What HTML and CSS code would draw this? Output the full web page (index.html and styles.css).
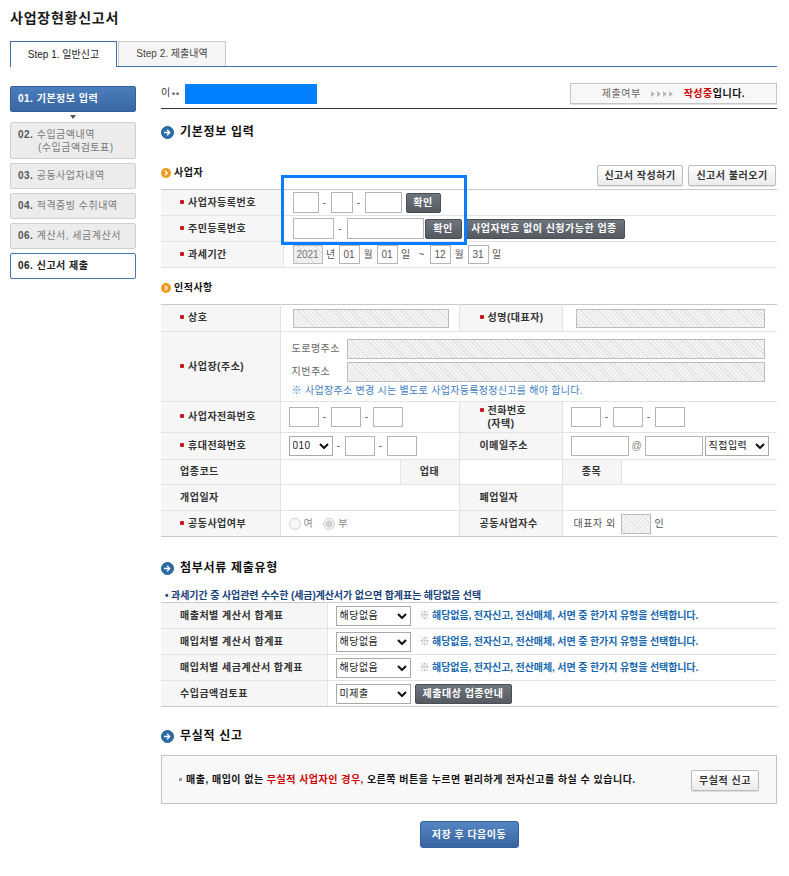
FILE: index.html
```html
<!DOCTYPE html>
<html lang="ko">
<head>
<meta charset="utf-8">
<title>사업장현황신고서</title>
<link rel="stylesheet" href="styles.css">
</head>
<body>
<div class="page">
  <h1 class="title">사업장현황신고서</h1>
  <div class="tabs">
    <div class="tab tab-on">Step 1. 일반신고</div>
    <div class="tab">Step 2. 제출내역</div>
  </div>
  <div class="layout">
    <nav class="side">
      <div class="step step-cur"><b>01. 기본정보 입력</b></div>
      <div class="step-arrow"><span class="tri"></span></div>
      <div class="step step-tall"><span><b>02.</b> 수입금액내역</span><span class="indent">(수입금액검토표)</span></div>
      <div class="step"><span><b>03.</b> 공동사업자내역</span></div>
      <div class="step"><span><b>04.</b> 적격증빙 수취내역</span></div>
      <div class="step"><span><b>06.</b> 계산서, 세금계산서</span></div>
      <div class="step step-on"><b>06. 신고서 제출</b></div>
    </nav>

    <main class="main">
      <div class="topbar">
        <div class="who"><span>이<span class="stars">**</span></span><span class="mask"></span></div>
        <div class="status">
          <span class="st-label">제출여부</span>
          <svg class="st-arrows" width="23" height="6" viewBox="0 0 23 6"><path d="M0 0l4 3-4 3zM6 0l4 3-4 3zM12 0l4 3-4 3zM18 0l4 3-4 3z" fill="#b9b9b9"/></svg>
          <b class="red">작성중</b><b class="dark">입니다.</b>
        </div>
      </div>

      <h2 class="sec sec-first">
        <svg width="13" height="13" viewBox="0 0 13 13"><circle cx="6.5" cy="6.5" r="6" fill="#2d6dab" stroke="#1f5890"/><path d="M3.6 6.5h4.8M6.5 4.3l2.2 2.2-2.2 2.2" stroke="#fff" stroke-width="1.4" fill="none" stroke-linecap="round" stroke-linejoin="round"/></svg>
        기본정보 입력
      </h2>

      <div class="subhead">
        <h3 class="sub">
          <svg width="10" height="10" viewBox="0 0 10 10"><circle cx="5" cy="5" r="5" fill="#f29a1c"/><path d="M4 2.8l2.1 2.2L4 7.2" stroke="#fff" stroke-width="1.4" fill="none"/></svg>
          사업자
        </h3>
        <div class="btns">
          <button class="btn-light w86">신고서 작성하기</button>
          <button class="btn-light w88">신고서 불러오기</button>
        </div>
      </div>

      <div class="t1wrap">
        <table class="grid t1">
          <colgroup><col class="c122"><col></colgroup>
          <tr>
            <th><span class="req"></span>사업자등록번호</th>
            <td>
              <div class="fl">
                <input class="ip w26" type="text"><span class="dash">-</span><input class="ip w22" type="text"><span class="dash">-</span><input class="ip w37" type="text">
                <button class="btn-dark w35 ml4">확인</button>
              </div>
            </td>
          </tr>
          <tr>
            <th><span class="req"></span>주민등록번호</th>
            <td>
              <div class="fl">
                <input class="ip w41" type="text"><span class="dash d13">-</span><input class="ip w77" type="text">
                <button class="btn-dark w37 ml1">확인</button>
                <button class="btn-dark w161 ml2">사업자번호 없이 신청가능한 업종</button>
              </div>
            </td>
          </tr>
          <tr>
            <th><span class="req"></span>과세기간</th>
            <td>
              <div class="fl">
                <input class="ip hatch w30 h19" type="text" value="2021" disabled><span class="u">년</span><input class="ip w21 h19" type="text" value="01"><span class="u u17">월</span><input class="ip w21 h19" type="text" value="01"><span class="u">일</span><span class="u">~</span><input class="ip w21 h19" type="text" value="12"><span class="u u17">월</span><input class="ip w21 h19" type="text" value="31"><span class="u">일</span>
              </div>
            </td>
          </tr>
        </table>
        <div class="hl"></div>
      </div>

      <h3 class="sub sub-alone">
        <svg width="10" height="10" viewBox="0 0 10 10"><circle cx="5" cy="5" r="5" fill="#f29a1c"/><path d="M4 2.8l2.1 2.2L4 7.2" stroke="#fff" stroke-width="1.4" fill="none"/></svg>
        인적사항
      </h3>

      <table class="grid t2">
        <colgroup><col class="c119"><col class="c120"><col class="c59"><col class="c103"><col class="c59"><col class="c156"></colgroup>
        <tr class="r27">
          <th><span class="req"></span>상호</th>
          <td colspan="2" class="p12"><input class="ip hatch w156 h19" type="text" disabled></td>
          <th class="th2"><span class="req"></span>성명(대표자)</th>
          <td colspan="2" class="p13"><input class="ip hatch w189 h19" type="text" disabled></td>
        </tr>
        <tr class="r70">
          <th><span class="req"></span>사업장(주소)</th>
          <td colspan="5" class="addr">
            <div class="addr-line"><span class="addr-lab">도로명주소</span><input class="ip hatch full" type="text" disabled></div>
            <div class="addr-line"><span class="addr-lab">지번주소</span><input class="ip hatch full" type="text" disabled></div>
            <div class="addr-note">※ 사업장주소 변경 시는 별도로 사업자등록정정신고를 해야 합니다.</div>
          </td>
        </tr>
        <tr class="r31">
          <th><span class="req"></span>사업자전화번호</th>
          <td colspan="2">
            <div class="fl"><input class="ip w30" type="text"><span class="dash">-</span><input class="ip w30" type="text"><span class="dash">-</span><input class="ip w30" type="text"></div>
          </td>
          <th class="th2"><div class="two"><span class="req"></span><span>전화번호<br>(자택)</span></div></th>
          <td colspan="2">
            <div class="fl"><input class="ip w30" type="text"><span class="dash">-</span><input class="ip w30" type="text"><span class="dash">-</span><input class="ip w30" type="text"></div>
          </td>
        </tr>
        <tr class="r27">
          <th><span class="req"></span>휴대전화번호</th>
          <td colspan="2">
            <div class="fl">
              <span class="sel w44"><select><option>010</option></select><svg width="10" height="6" viewBox="0 0 10 6"><path d="M1 1l4 4 4-4" stroke="#111" stroke-width="2" fill="none"/></svg></span><span class="dash">-</span><input class="ip w30" type="text"><span class="dash">-</span><input class="ip w30" type="text">
            </div>
          </td>
          <th class="th2">이메일주소</th>
          <td colspan="2">
            <div class="fl">
              <input class="ip w58" type="text"><span class="at">@</span><input class="ip w58" type="text">
              <span class="sel w64 ml2"><select><option>직접입력</option></select><svg width="10" height="6" viewBox="0 0 10 6"><path d="M1 1l4 4 4-4" stroke="#111" stroke-width="2" fill="none"/></svg></span>
            </div>
          </td>
        </tr>
        <tr class="r25">
          <th>업종코드</th>
          <td></td>
          <th class="c">업태</th>
          <td></td>
          <th class="c">종목</th>
          <td></td>
        </tr>
        <tr class="r26">
          <th>개업일자</th>
          <td colspan="2"></td>
          <th class="th2">폐업일자</th>
          <td colspan="2"></td>
        </tr>
        <tr class="r26">
          <th><span class="req"></span>공동사업여부</th>
          <td colspan="2">
            <div class="fl radios">
              <label class="rd"><input type="radio" name="jo" disabled><span>여</span></label>
              <label class="rd"><input type="radio" name="jo" checked disabled><span>부</span></label>
            </div>
          </td>
          <th class="th2">공동사업자수</th>
          <td colspan="2" class="p11">
            <div class="fl"><span class="gray">대표자 외</span><input class="ip hatch w30 h20 ml5" type="text" disabled><span class="gray ml4">인</span></div>
          </td>
        </tr>
      </table>

      <h2 class="sec sec-attach">
        <svg width="13" height="13" viewBox="0 0 13 13"><circle cx="6.5" cy="6.5" r="6" fill="#2d6dab" stroke="#1f5890"/><path d="M3.6 6.5h4.8M6.5 4.3l2.2 2.2-2.2 2.2" stroke="#fff" stroke-width="1.4" fill="none" stroke-linecap="round" stroke-linejoin="round"/></svg>
        첨부서류 제출유형
      </h2>
      <p class="note-line">• 과세기간 중 사업관련 수수한 (세금)계산서가 없으면 합계표는 해당없음 선택</p>

      <table class="grid t3">
        <colgroup><col class="c166"><col></colgroup>
        <tr>
          <th>매출처별 계산서 합계표</th>
          <td><div class="fl"><span class="sel w75"><select><option>해당없음</option></select><svg width="10" height="6" viewBox="0 0 10 6"><path d="M1 1l4 4 4-4" stroke="#111" stroke-width="2" fill="none"/></svg></span><span class="guide"><span class="kome">※</span> 해당없음, 전자신고, 전산매체, 서면 중 한가지 유형을 선택합니다.</span></div></td>
        </tr>
        <tr>
          <th>매입처별 계산서 합계표</th>
          <td><div class="fl"><span class="sel w75"><select><option>해당없음</option></select><svg width="10" height="6" viewBox="0 0 10 6"><path d="M1 1l4 4 4-4" stroke="#111" stroke-width="2" fill="none"/></svg></span><span class="guide"><span class="kome">※</span> 해당없음, 전자신고, 전산매체, 서면 중 한가지 유형을 선택합니다.</span></div></td>
        </tr>
        <tr>
          <th>매입처별 세금계산서 합계표</th>
          <td><div class="fl"><span class="sel w75"><select><option>해당없음</option></select><svg width="10" height="6" viewBox="0 0 10 6"><path d="M1 1l4 4 4-4" stroke="#111" stroke-width="2" fill="none"/></svg></span><span class="guide"><span class="kome">※</span> 해당없음, 전자신고, 전산매체, 서면 중 한가지 유형을 선택합니다.</span></div></td>
        </tr>
        <tr>
          <th>수입금액검토표</th>
          <td><div class="fl"><span class="sel w75"><select><option>미제출</option></select><svg width="10" height="6" viewBox="0 0 10 6"><path d="M1 1l4 4 4-4" stroke="#111" stroke-width="2" fill="none"/></svg></span><button class="btn-dark w97 ml4">제출대상 업종안내</button></div></td>
        </tr>
      </table>

      <h2 class="sec sec-nil">
        <svg width="13" height="13" viewBox="0 0 13 13"><circle cx="6.5" cy="6.5" r="6" fill="#2d6dab" stroke="#1f5890"/><path d="M3.6 6.5h4.8M6.5 4.3l2.2 2.2-2.2 2.2" stroke="#fff" stroke-width="1.4" fill="none" stroke-linecap="round" stroke-linejoin="round"/></svg>
        무실적 신고
      </h2>
      <div class="nil-box">
        <p class="nil-text"><span class="sq"></span>매출, 매입이 없는 <span class="red">무실적 사업자인 경우,</span> 오른쪽 버튼을 누르면 편리하게 전자신고를 하실 수 있습니다.</p>
        <button class="btn-light w68">무실적 신고</button>
      </div>

      <button class="save">저장 후 다음이동</button>
    </main>
  </div>
</div>
</body>
</html>
```

FILE: styles.css
```css
* { box-sizing: border-box; }
html, body { margin: 0; padding: 0; background: #fff; }
body {
  font-family: "Liberation Sans", "Noto Sans CJK KR", sans-serif;
  font-size: 10px;
  line-height: 12px;
  letter-spacing: 0.5px;
  color: #333;
}
button, input, select { font: inherit; color: inherit; letter-spacing: inherit; margin: 0; }
h1, h2, h3, p { margin: 0; }

.page { width: 789px; padding: 0 12px 0 10px; }

.title {
  height: 41px;
  padding-top: 10px;
  font-size: 14px;
  line-height: 16px;
  letter-spacing: 0.75px;
  font-weight: bold;
  color: #1b1b1b;
}

/* tabs */
.tabs {
  display: flex;
  align-items: flex-start;
  gap: 1px;
  height: 26px;
  border-bottom: 1px solid #3f6fae;
}
.tab {
  width: 108px;
  height: 25px;
  display: flex;
  align-items: center;
  justify-content: center;
  background: #f5f5f5;
  border: 1px solid #c9c9c9;
  border-bottom: 0;
  color: #444;
  letter-spacing: 0;
}
.tab-on {
  width: 107px;
  height: 26px;
  background: #fff;
  border-color: #3f6fae;
  margin-bottom: -1px;
  color: #222;
}

/* layout */
.layout { display: flex; gap: 25px; padding-top: 16px; }
.side { width: 126px; flex: none; padding-top: 3px; }
.main { width: 616px; flex: none; }

/* side steps */
.step {
  height: 26px;
  margin-bottom: 4px;
  padding-left: 7px;
  display: flex;
  align-items: center;
  border: 1px solid #cfcfcf;
  border-radius: 2px;
  background: #ececec;
  color: #7a7a7a;
  white-space: nowrap;
}
.step b { color: #555; }
.step-cur {
  background: linear-gradient(#4c7ebc, #3866a3);
  border-color: #33609a;
  margin-bottom: 0;
}
.step-cur b { color: #fff; }
.step-arrow { height: 10px; display: flex; justify-content: center; align-items: center; }
.tri {
  width: 0; height: 0;
  border-left: 3px solid transparent;
  border-right: 3px solid transparent;
  border-top: 4px solid #555;
}
.step-tall {
  height: 37px;
  flex-direction: column;
  align-items: flex-start;
  justify-content: center;
  line-height: 13px;
}
.indent { padding-left: 20px; }
.step-on { background: #fff; border-color: #4677b4; }
.step-on b { color: #222; }

/* top bar */
.topbar {
  display: flex;
  justify-content: space-between;
  align-items: flex-start;
  height: 26px;
  border-bottom: 1px solid #333;
}
.who { display: flex; align-items: center; height: 22px; color: #333; }
.stars { font-size: 9px; vertical-align: -2px; margin-left: 1px; }
.mask { width: 132px; height: 20px; background: #0080ff; margin-left: 5px; }
.status {
  width: 207px;
  height: 21px;
  display: flex;
  align-items: center;
  justify-content: center;
  border: 1px solid #c6c6c6;
  background: #f7f7f7;
  box-shadow: 0 1px 0 #e2e2e2;
}
.st-label { color: #666; }
.st-arrows { margin: 0 10px; }
.red { color: #cc0000; }
.dark { color: #111; }
.status b { font-weight: bold; }

/* headings */
.sec {
  display: flex;
  align-items: center;
  gap: 6px;
  height: 16px;
  font-size: 12px;
  line-height: 16px;
  letter-spacing: 0.7px;
  color: #111;
  font-weight: bold;
}
.sec svg { flex: none; }
.sec-first { margin-top: 15px; }
.sec-attach { margin-top: 23px; }
.sec-nil { margin-top: 21px; }

.subhead {
  display: flex;
  justify-content: space-between;
  align-items: flex-end;
  margin-top: 25px;
}
.sub {
  display: flex;
  align-items: center;
  gap: 3px;
  font-size: 10px;
  line-height: 14px;
  margin-bottom: 9px;
  color: #111;
  font-weight: bold;
}
.sub svg { flex: none; }
.sub-alone { margin-top: 13px; }
.btns { display: flex; gap: 5px; margin-bottom: 3px; margin-right: 1px; }

/* buttons */
.btn-light {
  height: 21px;
  padding: 0;
  border: 1px solid #bdbdbd;
  border-radius: 2px;
  background: linear-gradient(#ffffff, #ebebeb);
  box-shadow: 0 1px 1px rgba(0,0,0,0.12);
  font-weight: bold;
  color: #333;
  text-align: center;
  white-space: nowrap;
}
.btn-dark {
  height: 20px;
  padding: 0;
  border: 1px solid #4a4f56;
  border-radius: 2px;
  background: linear-gradient(#6f757d, #555a61);
  color: #fff;
  font-weight: bold;
  text-align: center;
  white-space: nowrap;
}
.w86 { width: 86px; }
.w88 { width: 88px; }
.w68 { width: 68px; }
.w35 { width: 35px; }
.w37 { width: 37px; }
.w161 { width: 161px; }
.w97 { width: 97px; }

/* tables */
.grid {
  width: 100%;
  border-collapse: collapse;
  table-layout: fixed;
  border-top: 1px solid #c9c9c9;
}
.grid th, .grid td {
  border-bottom: 1px solid #e3e3e3;
  padding: 0 0 0 8px;
  vertical-align: middle;
}
.grid th {
  background: #f6f6f6;
  text-align: left;
  padding-left: 19px;
  font-weight: bold;
  color: #333;
  border-right: 1px solid #e3e3e3;
  white-space: nowrap;
}
.grid td + th { border-left: 1px solid #e3e3e3; }
.grid th.th2 { padding-left: 20px; }
.grid th.c { text-align: center; padding-left: 0; }

.c122 { width: 122px; }
.c119 { width: 119px; }
.c120 { width: 120px; }
.c59 { width: 59px; }
.c103 { width: 103px; }
.c156 { width: 156px; }
.c166 { width: 166px; }

.t1 tr { height: 26px; }
.t1 td { padding-left: 9px; }
.t2 { border-bottom: 1px solid #c9c9c9; }
.t2 tr:last-child > * { border-bottom-color: #c9c9c9; }
.t3 tr { height: 26px; }
.t3 tr:last-child > * { border-bottom-color: #c9c9c9; }

.r27 { height: 27px; }
.r70 { height: 70px; }
.r31 { height: 31px; }
.r25 { height: 25px; }
.r26 { height: 26px; }

.grid td.p12 { padding-left: 12px; }
.grid td.p13 { padding-left: 13px; }
.grid td.p11 { padding-left: 11px; }

.req {
  display: inline-block;
  width: 4px;
  height: 4px;
  border-radius: 1px;
  background: #c8161d;
  margin-right: 4px;
  vertical-align: 2px;
}
.two { display: flex; align-items: flex-start; line-height: 13px; }
.two .req { margin-top: 4px; flex: none; }

.t1wrap { position: relative; }
.hl {
  position: absolute;
  left: 120px;
  top: -14px;
  width: 186px;
  height: 70px;
  border: 3px solid #0a7dff;
  pointer-events: none;
}

/* form bits */
.fl { display: flex; align-items: center; }
.ip {
  height: 21px;
  padding: 0 2px;
  border: 1px solid #b5b5b5;
  background: #fff;
  color: #555;
  text-align: center;
  outline: none;
  letter-spacing: 0;
}
.h19 { height: 19px; }
.h20 { height: 20px; }
.hatch {
  background-color: #f2f2f2;
  background-image: repeating-linear-gradient(45deg, #f4f4f4 0, #f4f4f4 2px, #e2e2e2 2px, #e2e2e2 3px);
  border-color: #bcbcbc;
  color: #777;
}
.w21 { width: 21px; }
.w22 { width: 22px; }
.w26 { width: 26px; }
.w30 { width: 30px; }
.w41 { width: 41px; }
.w58 { width: 58px; }
.w77 { width: 77px; }
.w156 { width: 156px; }
.w189 { width: 189px; }
.ml1 { margin-left: 1px; }
.ml2 { margin-left: 2px; }
.ml4 { margin-left: 4px; }
.ml5 { margin-left: 5px; }

.t2 .ip:not(.hatch) { height: 20px; }

.dash { width: 12px; text-align: center; color: #555; letter-spacing: 0; }
.d13 { width: 13px; }
.u { width: 16px; text-align: center; color: #555; letter-spacing: 0; }
.u17 { width: 17px; }
.at { width: 16px; text-align: center; color: #888; letter-spacing: 0; }
.gray { color: #555; }

.sel { position: relative; display: inline-block; height: 20px; }
.sel select {
  -webkit-appearance: none;
  appearance: none;
  width: 100%;
  height: 20px;
  border: 1px solid #a9a9a9;
  background: #fff;
  padding: 0 0 0 3px;
  color: #222;
  outline: none;
}
.sel svg { position: absolute; right: 4px; top: 7px; pointer-events: none; }
.w44 { width: 44px; }
.w64 { width: 64px; }
.w75 { width: 75px; }

.addr { padding: 6px 12px 3px 11px !important; }
.addr-line { display: flex; align-items: center; }
.addr-line + .addr-line { margin-top: 3px; }
.addr-lab { width: 55px; flex: none; color: #666; }
.hatch.full { flex: 1; height: 20px; }
.addr-note { margin-top: 2px; line-height: 14px; font-size: 10px; letter-spacing: 0.3px; color: #3f80c2; }

.radios { gap: 0; }
.rd { display: flex; align-items: center; color: #888; margin-right: 10px; }
.rd input { width: 12px; height: 12px; margin: 0 3px 0 0; }

/* attachments */
.note-line {
  margin-top: 14px;
  padding-left: 4px;
  line-height: 12px;
  font-size: 10px;
  letter-spacing: -0.1px;
  font-weight: bold;
  color: #18417a;
}
.guide { margin-left: 9px; font-size: 10px; letter-spacing: -0.1px; font-weight: bold; color: #1767b0; white-space: nowrap; }
.kome { color: #9a9a9a; font-weight: normal; }

/* nil */
.nil-box {
  margin-top: 11px;
  height: 49px;
  display: flex;
  align-items: center;
  justify-content: space-between;
  padding: 0 17px 0 17px;
  border: 1px solid #c4c4c4;
  background: #f8f8f8;
}
.nil-text { display: flex; align-items: center; font-weight: bold; color: #111; white-space: nowrap; }
.nil-text .red { color: #cc0000; margin: 0 3px; }
.sq { width: 3px; height: 3px; background: #999; margin-right: 4px; flex: none; }
.nil-box .btn-light { margin-top: 2px; }

.save {
  display: block;
  width: 99px;
  height: 27px;
  margin: 17px auto 0;
  padding: 0;
  border: 1px solid #33609a;
  border-radius: 3px;
  background: linear-gradient(#5486c3, #3965a1);
  box-shadow: 0 1px 1px rgba(0,0,0,0.2);
  color: #fff;
  font-weight: bold;
  text-align: center;
}
```
